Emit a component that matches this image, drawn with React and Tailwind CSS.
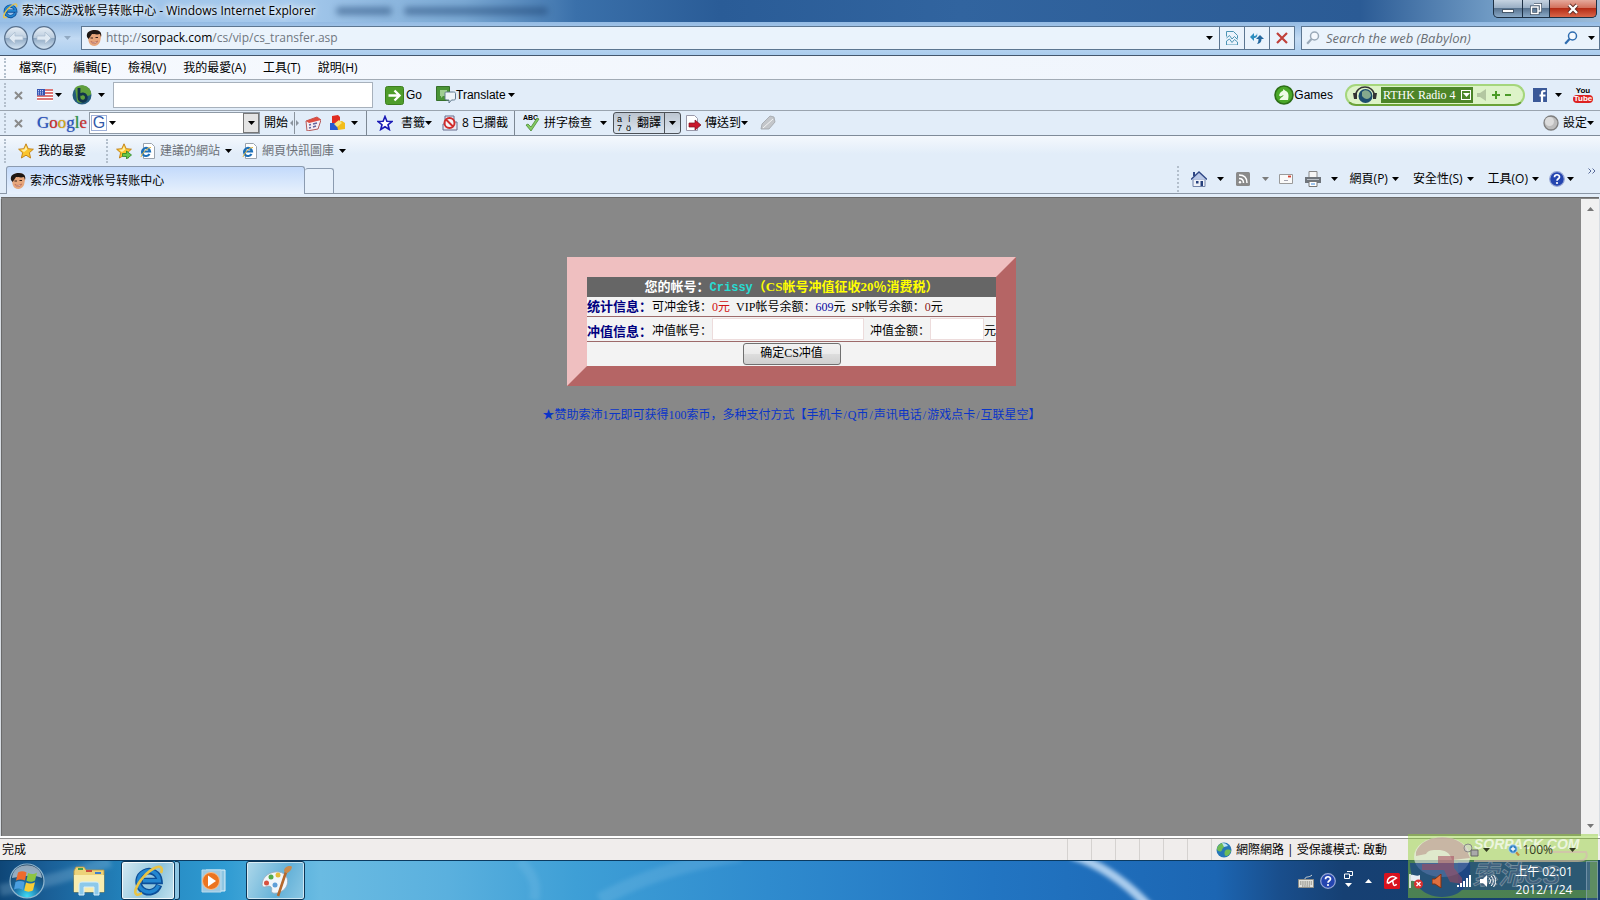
import { Fragment } from 'react';
import clsx from 'clsx';

const UI = 'font-["Open_Sans","Noto_Sans_CJK_TC",sans-serif]';
const SONG = 'font-["Liberation_Serif","Noto_Sans_CJK_SC",serif]';

const MENUS = ['檔案(F)', '編輯(E)', '檢視(V)', '我的最愛(A)', '工具(T)', '說明(H)'];
const PAYMENTS = ['手机卡', 'Q币', '声讯电话', '游戏点卡', '互联星空'];

function Caret({ className }) {
  return (
    <svg viewBox="0 0 7 4" className={clsx('h-1 w-[7px] shrink-0', className)} fill="currentColor">
      <path d="M0 0h7L3.5 4z" />
    </svg>
  );
}

function Grip({ className }) {
  return <div className={clsx('w-0 shrink-0 border-l-2 border-dotted border-[#b3bfcc]', className)} />;
}

function CloseX() {
  return (
    <button aria-label="Close toolbar" className="shrink-0 text-[#8a8a8a]">
      <svg viewBox="0 0 9 9" className="h-[9px] w-[9px]" stroke="currentColor" strokeWidth="2">
        <path d="M1 1l7 7M8 1L1 8" />
      </svg>
    </button>
  );
}

function IeLogo({ className }) {
  return (
    <svg viewBox="0 0 32 32" className={className} fill="none">
      <path d="M27 20A10.500 10.500 0 1 1 27.500 16H10" stroke="#0c4f99" strokeWidth="6.500" />
      <path d="M26.500 20.500A10.500 10.500 0 1 1 27.300 15.700H11" stroke="#2386d0" strokeWidth="3.500" />
      <path d="M29 8c2-5 0-7.500-5-5.500C15 6 6 17 3.500 25c-1 5 1.500 6 6.500 3" stroke="#e9c445" strokeWidth="2.600" />
    </svg>
  );
}

function IePage() {
  return (
    <svg viewBox="0 0 16 16" className="h-4 w-4 shrink-0" fill="none">
      <path d="M3.500.5h8l3 3v12h-11z" fill="#fff" stroke="#9aa3ad" />
      <path d="M9.500 11A4 4 0 1 1 10 8.500H3" stroke="#1e70b8" strokeWidth="2.200" />
      <path d="M11 4.500C8 4 2 10 1 14" stroke="#e6b93a" />
    </svg>
  );
}

function Face() {
  return (
    <svg viewBox="0 0 16 16" className="h-4 w-4 shrink-0">
      <path d="M2 6c0-4 3-6 7-6s7 3 6 7l-1 5c-2 4-6 5-9 3-2-1-3-5-3-9z" fill="#e6a67c" />
      <path d="M1 7C0 2 4 0 9 0s7 3 6 7l-1-3c-3 1-6 0-8 0L4 7 2.500 9z" fill="#1e1714" />
      <path d="M4.500 8h2.500M9.500 7.500H12" stroke="#3b241b" strokeWidth="1.200" />
      <path d="M5 11.500c2 1.500 4.500 1.200 6.500-.5-.5 3-5 3.500-6.500.5z" fill="#fff" stroke="#a4493a" strokeWidth=".6" />
    </svg>
  );
}

function NavOrb({ flip }) {
  return (
    <button aria-label={flip ? 'Forward' : 'Back'} className="flex h-6 w-6 shrink-0">
      <svg viewBox="0 0 24 24" className={clsx('h-6 w-6', flip && '-scale-x-100')}>
        <defs>
          <linearGradient id="orb" x1="0" y1="0" x2="0" y2="1">
            <stop offset="0" stopColor="#e8eff6" />
            <stop offset=".48" stopColor="#bccddf" />
            <stop offset=".52" stopColor="#8fa9c4" />
            <stop offset="1" stopColor="#d8e8f5" />
          </linearGradient>
        </defs>
        <circle cx="12" cy="12" r="11.300" fill="url(#orb)" stroke="#58708c" strokeWidth="1.200" />
        <path d="M5 12l6-6v4h8v4h-8v4z" fill="#dfe9f3" stroke="#a9bccf" strokeWidth=".7" />
      </svg>
    </button>
  );
}

function StarIcon({ arrow }) {
  return (
    <svg viewBox="0 0 16 16" className="h-4 w-4 shrink-0">
      <path d="M8 .8l2.200 4.900 5.200.5-4 3.500 1.200 5.300L8 12.200 3.400 15l1.200-5.300-4-3.500 5.200-.5z" fill="#fbc52d" stroke="#c07d12" strokeWidth=".9" />
      <path d="M8 3l1.300 3.500L6 9l-3-2.200 3.300-.4z" fill="#fff0a6" />
      {arrow && <path d="M6.500 10.500h4V8l5 4-5 4v-2.500h-4z" fill="#67c84a" stroke="#2b8423" strokeWidth=".8" />}
    </svg>
  );
}

function Help({ className }) {
  return (
    <svg viewBox="0 0 16 16" className={clsx('h-4 w-4 shrink-0', className)}>
      <circle cx="8" cy="8" r="7.300" fill="#2445b0" stroke="#98a7d6" strokeWidth="1.200" />
      <path d="M5.500 6.200C5.500 3 10.500 3 10.500 6c0 1.800-2.500 1.800-2.500 3.800" stroke="#fff" strokeWidth="1.700" fill="none" />
      <circle cx="8" cy="12" r="1.100" fill="#fff" />
    </svg>
  );
}

function Magnifier({ className }) {
  return (
    <svg viewBox="0 0 14 14" className={clsx('h-3.5 w-3.5 shrink-0', className)} fill="none" stroke="currentColor">
      <circle cx="8.500" cy="5" r="4" strokeWidth="1.500" fill="#ffffff88" />
      <path d="M5.500 8L1.200 12.800" strokeWidth="2.200" />
    </svg>
  );
}

function TitleBar() {
  return (
    <header className="flex h-[22px] items-start justify-between bg-[linear-gradient(90deg,#98bfe6_0%,#a6caed_18%,#7ba9d4_29%,#3a70aa_36%,#2a5c97_45%,#31649f_60%,#2b5b95_85%,#6e99c3_93%,#9dbcd9_100%)]">
      <div className="flex items-center gap-1 pl-0.5">
        <IeLogo className="h-4 w-4" />
        <h1 className="text-[12px] leading-[22px] text-black [text-shadow:0_0_6px_#fff,0_0_10px_#fff,0_0_4px_#ffffffaa]">
          索沛CS游戏帐号转账中心 - Windows Internet Explorer
        </h1>
        <div className="ml-4 h-2 w-14 rounded bg-[#1d4472]/50 blur-[3px]" />
        <div className="ml-2 h-2 w-36 rounded bg-[#1d4472]/50 blur-[3px]" />
      </div>
      <div className="mr-[3px] flex h-[18px] overflow-hidden rounded-b-[5px] border border-t-0 border-[#1d3044] bg-[#1d3044]">
        <button aria-label="Minimize" className="flex w-7 items-center justify-center bg-[linear-gradient(#c5d3e1_0%,#9aafc5_45%,#58738f_50%,#8aa9c7_100%)]">
          <span className="mt-1 h-1 w-3 border border-[#46586b] bg-white" />
        </button>
        <button aria-label="Restore" className="ml-px flex w-[26px] items-center justify-center bg-[linear-gradient(#c5d3e1_0%,#9aafc5_45%,#58738f_50%,#8aa9c7_100%)]">
          <svg viewBox="0 0 12 12" className="h-3 w-3" fill="none">
            <path d="M4 1h7v7H8.500M1.500 4h6.500v6.500H1.500z" stroke="#3f5164" strokeWidth="3" />
            <path d="M4 1.500h6.500v6.500H8.500M1.500 4h6.500v6.500H1.500z" stroke="#fff" strokeWidth="1.500" />
          </svg>
        </button>
        <button aria-label="Close" className="ml-px flex w-[46px] items-center justify-center bg-[linear-gradient(#e5a99c_0%,#d3715d_45%,#b52c16_50%,#d9664a_100%)]">
          <svg viewBox="0 0 12 12" className="h-3 w-3">
            <path d="M2 2l8 8M10 2l-8 8" stroke="#5c2a24" strokeWidth="4" />
            <path d="M2 2l8 8M10 2l-8 8" stroke="#fff" strokeWidth="2.400" />
          </svg>
        </button>
      </div>
    </header>
  );
}

function AddressBar() {
  const box = 'flex h-6 items-center border border-[#5c7691] bg-[#eaf3fc]';
  return (
    <div className="flex h-[34px] items-center border-b border-[#44566c] bg-[linear-gradient(#93bae3,#c2daf3_50%,#abcdee)] pb-0.5 pl-1">
      <NavOrb />
      <div className="ml-1">
        <NavOrb flip />
      </div>
      <Caret className="ml-2 text-[#91a9c2]" />
      <form className={clsx(box, 'ml-2.5 min-w-0 flex-1 pl-1')} onSubmit={(e) => e.preventDefault()}>
        <Face />
        <label className="ml-1 flex-1 text-[12px] leading-5 text-[#6f7780]">
          http://<span className="text-black">sorpack.com</span>/cs/vip/cs_transfer.asp
        </label>
        <Caret className="mr-1.5" />
        <button aria-label="Compatibility view" className="flex h-full w-[25px] items-center justify-center border-l border-[#5c7691]">
          <svg viewBox="0 0 12 14" className="h-3.5 w-3" fill="none" stroke="#4d95b5">
            <path d="M.5 5.500v-5h7l4 4v3M.5 7l3-2.500L6 8l2.500-2.500 3 3M.5 10l3-2 2.500 3.500 2.500-3 3 2.500v3H.5z" />
          </svg>
        </button>
        <button aria-label="Refresh" className="flex h-full w-[25px] items-center justify-center border-l border-[#5c7691]">
          <svg viewBox="0 0 14 12" className="h-3 w-3.5">
            <path d="M0 5l4-4v3c2 0 3-1 3-3 1 4-1 5-3 5v3z" fill="#2d8ec0" />
            <path d="M14 7l-4-4-4 4h2.500c0 2-.5 4-1.500 5 3-.5 4.500-2 4.500-5z" fill="#24689f" />
          </svg>
        </button>
        <button aria-label="Stop" className="flex h-full w-[25px] items-center justify-center border-l border-[#5c7691]">
          <svg viewBox="0 0 12 12" className="h-3 w-3" stroke="#c0403a" strokeWidth="2.200">
            <path d="M1 1l10 10M11 1L1 11" />
          </svg>
        </button>
      </form>
      <form className={clsx(box, 'ml-1.5 w-[299px] px-1')} onSubmit={(e) => e.preventDefault()}>
        <Magnifier className="text-[#9aa9b8]" />
        <input
          aria-label="Search the web"
          placeholder="Search the web (Babylon)"
          className="ml-1.5 min-w-0 flex-1 bg-transparent text-[13px] italic leading-5 outline-none placeholder:text-[#6b7075]"
        />
        <Magnifier className="text-[#2f6db0]" />
        <Caret className="ml-2.5" />
      </form>
    </div>
  );
}

function MenuBar() {
  return (
    <nav className="flex h-6 items-center border-b border-[#a2abb5] bg-[linear-gradient(90deg,#f6f9fe,#eef4fc)] pl-1">
      <Grip className="h-5" />
      <div className="ml-[13px] flex gap-[17px]">
        {MENUS.map((m) => (
          <button key={m} className="text-[12px] leading-5">{m}</button>
        ))}
      </div>
    </nav>
  );
}

function BabylonBar() {
  return (
    <div className='flex h-[31px] items-center border-b border-[#9aa4af] bg-[#e2edf9] pl-1 pr-2 font-["Liberation_Sans",sans-serif] text-[12px]'>
      <Grip className="mr-2 h-6" />
      <CloseX />
      <svg viewBox="0 0 16 12" className="ml-3.5 h-3 w-4">
        <path d="M0 0h16v12H0z" fill="#fff" />
        <path d="M0 1h16M0 4h16M0 7h16M0 10h16" stroke="#d24a4a" strokeWidth="1.500" />
        <path d="M0 0h8v6.500H0z" fill="#3656b4" />
        <path d="M1 1.500h6M1 3.200h6M1 5h6" stroke="#c9d6fa" strokeDasharray="1 1" />
      </svg>
      <Caret className="ml-0.5 mr-2.5" />
      <svg viewBox="0 0 20 20" className="h-5 w-5">
        <circle cx="10" cy="10" r="9.500" fill="#235b7b" />
        <path d="M3 3c4-4 13-4 16 4 1 5-3 2-5 6-2 5-7 6-9 3z" fill="#5f9f3d" />
        <path d="M7 3v9.500a3.700 3.700 0 1 0 1-2.500" stroke="#12344c" strokeWidth="2.800" fill="none" />
      </svg>
      <Caret className="ml-1.5 mr-2" />
      <input aria-label="Babylon search" className="h-[26px] w-[260px] border border-[#a7b1bc] bg-white px-1" />
      <button className="ml-3 flex items-center gap-0.5">
        <svg viewBox="0 0 19 19" className="h-[19px] w-[19px]">
          <rect x=".5" y=".5" width="18" height="18" rx="2" fill="#4f9d2b" stroke="#3c7e1f" />
          <path d="M3.500 9.500h10M9.500 4.500l5 5-5 5" stroke="#fff" strokeWidth="2.400" fill="none" />
        </svg>
        Go
      </button>
      <button className="ml-3.5 flex items-center">
        <svg viewBox="0 0 20 18" className="h-[18px] w-5">
          <path d="M.5.5h13v14H.5z" fill="#4a9436" stroke="#35702a" />
          <path d="M4 4h7v6H7l-2 2v-2H4z" fill="#9fce91" />
          <path d="M10 6h7.500c2 0 2 1 2 2v4c0 2-1 2-2 2h-2L13 17v-3h-2c-2 0-2-1-2-2V8c0-1 0-2 1-2z" fill="#eef4f8" stroke="#60798c" />
        </svg>
        Translate
        <Caret className="ml-0.5" />
      </button>
      <div className="ml-auto flex items-center">
        <button className="flex items-center">
          <svg viewBox="0 0 20 20" className="h-5 w-5">
            <circle cx="10" cy="10" r="9" fill="#4ba829" stroke="#2c6e17" strokeWidth="1.600" />
            <path d="M5.500 15h8.500c1-4 1-8-3-9.500L9.500 4 9 5.800C7 6.500 5.500 8.500 5 10.500l1.500 1 3-1.500c0 2-3.500 2.500-4 5z" fill="#effbe6" />
          </svg>
          Games
        </button>
        <div className="ml-3 flex h-[22px] w-[180px] items-center rounded-full border-2 border-[#a5d67c] border-b-[#6aa338] bg-[#ddf3c8] pl-1.5">
          <svg viewBox="0 0 24 18" className="h-[18px] w-6 shrink-0">
            <circle cx="12.500" cy="10" r="7" fill="#1d4e6f" />
            <path d="M9 6c4-4 9 0 9 4-2 4-6 4-9 0z" fill="#84a98d" />
            <path d="M2.500 10C3-2 21-2 21.500 10" stroke="#333" strokeWidth="1.600" fill="none" />
            <path d="M0 7h4v6H1zM20 7h4l-1 6h-3z" fill="#333" />
          </svg>
          <button className='ml-1 flex h-4 w-[92px] shrink-0 items-center justify-between bg-[#4c8529] px-0.5 font-["Liberation_Serif",serif] text-[12px] leading-4 whitespace-nowrap text-white'>
            RTHK Radio 4
            <span className="flex h-2.5 w-2.5 items-center justify-center border border-white">
              <Caret />
            </span>
          </button>
          <svg viewBox="0 0 10 12" className="ml-1 h-3 w-2.5" fill="#b3c7a1">
            <path d="M0 4h3l6-4v12L3 8H0z" />
          </svg>
          <svg viewBox="0 0 22 10" className="ml-1 h-2.5 w-[22px]" stroke="#4b9b27" strokeWidth="2">
            <path d="M1 5h8M5 1v8M14 5h6" />
          </svg>
        </div>
        <svg viewBox="0 0 14 14" className="ml-2 h-3.5 w-3.5">
          <path d="M0 0h14v14H0z" fill="#3b5998" />
          <path d="M9 14V5c0-2 1-2 3.500-2M6.500 7.500h6" stroke="#fff" strokeWidth="2.200" fill="none" />
        </svg>
        <Caret className="ml-2" />
        <button className="ml-3 flex w-[18px] flex-col items-center text-[8px] font-bold leading-2">
          You
          <span className="rounded-sm bg-[#d22] px-px text-white">Tube</span>
        </button>
      </div>
    </div>
  );
}

function GoogleBar() {
  const sep = 'h-full w-px shrink-0 bg-[#7d8894]';
  return (
    <div className="flex h-[25px] items-center border-b border-[#7f8b99] bg-[#e2edf9] pl-1 pr-1.5 text-[12px] leading-5 whitespace-nowrap">
      <Grip className="mr-2 h-5" />
      <CloseX />
      <div className='ml-3.5 w-12 font-["Liberation_Serif",serif] text-[17px] leading-5 [text-shadow:0_0_1px_#6a7390]'>
        <span className="text-[#2a56c6]">G</span>
        <span className="text-[#d8322c]">o</span>
        <span className="text-[#e2ac15]">o</span>
        <span className="text-[#2a56c6]">g</span>
        <span className="text-[#2f9c3e]">l</span>
        <span className="text-[#d8322c]">e</span>
      </div>
      <div className="ml-1 flex h-[22px] w-[171px] items-center border border-[#8f9aa6] bg-white pl-px">
        <span className='flex h-4 w-4 items-center justify-center border border-[#9fb0d8] font-["Liberation_Sans",sans-serif] text-[16px] leading-4 text-[#3158a8]'>G</span>
        <Caret className="ml-0.5" />
        <input aria-label="Google search" className="min-w-0 flex-1 outline-none" />
        <button aria-label="Search history" className="flex h-5 w-4 items-center justify-center border border-[#777] bg-[#e4e4e4]">
          <Caret />
        </button>
      </div>
      <button className="ml-1">開始</button>
      <svg viewBox="0 0 9 22" className="ml-0.5 h-[22px] w-[9px]">
        <path d="M4.500 0v22" stroke="#8b949e" />
        <path d="M3 8v6L0 11zM6 8v6l3-3z" fill="#8b949e" />
      </svg>
      <svg viewBox="0 0 16 16" className="ml-1.5 h-4 w-4">
        <path d="M1 6l11-4 4 3-3 9-11 2z" fill="#f4eef4" stroke="#b35a5a" />
        <path d="M1 6l11-4 4 3-12 3z" fill="#dd4c40" />
        <path d="M4 10l2-.5M8 9l4-1M4 13l2-.5M8 12l3-1" stroke="#63649c" strokeWidth="1.500" />
      </svg>
      <svg viewBox="0 0 16 16" className="ml-2 h-4 w-4">
        <path d="M3 1l6-1 2 2v6H3z" fill="#e02c20" />
        <path d="M1 8h8v7H1z" fill="#2659cf" />
        <path d="M7 7l6-1 3 2v6l-7 1z" fill="#f2bd1a" />
        <path d="M5 9l5-4 3 3-5 4z" fill="#fae278" />
      </svg>
      <Caret className="ml-1.5 mr-2" />
      <div className={sep} />
      <button className="ml-2.5 flex items-center">
        <svg viewBox="0 0 16 16" className="mr-2 h-4 w-4">
          <path d="M8 1.500l1.900 4.700 5 .3-3.900 3.200 1.300 4.800L8 11.800l-4.300 2.700L5 9.700 1.100 6.500l5-.3z" fill="#fff" stroke="#1919b5" strokeWidth="1.600" />
        </svg>
        書籤
        <Caret />
      </button>
      <button className="ml-2.5 flex items-center">
        <svg viewBox="0 0 16 16" className="mr-1 h-4 w-4">
          <path d="M3 1h9v6h3v8H1V9h2z" fill="#e9e9f2" stroke="#666d8c" />
          <circle cx="7.500" cy="8" r="5" fill="#fff8" stroke="#d02c2c" strokeWidth="2" />
          <path d="M4 4.500l7 7" stroke="#d02c2c" strokeWidth="2" />
        </svg>
        8 已攔截
      </button>
      <div className={clsx(sep, 'ml-1.5')} />
      <button className="ml-2 flex items-center">
        <svg viewBox="0 0 18 18" className="mr-[3px] h-[18px] w-[18px]">
          <text x="0" y="6" fontSize="7" fontWeight="bold" fontFamily="Liberation Sans">ABC</text>
          <path d="M3 11l2-1 3 3 6-9 2 1-8 12z" fill="#85cb62" stroke="#4a8a35" strokeWidth=".8" />
        </svg>
        拼字檢查
        <Caret className="ml-2" />
      </button>
      <div className="ml-1.5 flex h-[22px] rounded-[3px] border border-[#4c5157] bg-[linear-gradient(#bcc5d0,#dbe5f0)]">
        <button className="flex items-center px-[3px]">
          <svg viewBox="0 0 16 18" className="mr-1 h-[18px] w-4">
            <text x="0" y="8" fontSize="9" fontFamily="Liberation Sans">a</text>
            <text x="11" y="8" fontSize="9" fontFamily="Liberation Sans">í</text>
            <text x="0" y="17" fontSize="9" fontFamily="Liberation Sans">7</text>
            <text x="9" y="17" fontSize="9" fontFamily="Liberation Sans">ö</text>
          </svg>
          翻譯
        </button>
        <button aria-label="Translate options" className="flex w-4 items-center justify-center border-l border-[#4c5157]">
          <Caret />
        </button>
      </div>
      <button className="ml-1 flex items-center">
        <svg viewBox="0 0 16 16" className="mr-1 h-4 w-4">
          <path d="M1.500.5h8l3 3v12h-11z" fill="#fff" stroke="#99a" />
          <path d="M4 8h6V5l6 5-6 5v-3H4z" fill="#c9172b" stroke="#7e0f1c" strokeWidth=".7" />
        </svg>
        傳送到
        <Caret />
      </button>
      <svg viewBox="0 0 16 16" className="ml-3 h-4 w-4">
        <path d="M1 14l1-5 8-8 4 1 1 5-6 7z" fill="#c3c6ca" stroke="#9fa3a8" strokeWidth=".8" />
        <path d="M3 13L13 4" stroke="#f3f4f5" />
      </svg>
      <button className="ml-auto flex items-center">
        <svg viewBox="0 0 16 16" className="mr-1 h-4 w-4">
          <circle cx="8" cy="8" r="7" fill="#bdbdbd" stroke="#7e7e7e" strokeWidth="1.300" />
          <circle cx="6.500" cy="6.500" r="4.500" fill="#dcdcdc" />
        </svg>
        設定
        <Caret />
      </button>
    </div>
  );
}

function FavoritesBar() {
  return (
    <div className="flex h-[30px] items-center bg-[linear-gradient(#f4f8fd,#e2edf9_60%)] pl-1 text-[12px] leading-5 text-[#6c7178]">
      <Grip className="h-6" />
      <button className="ml-3 flex items-center gap-1 text-black">
        <StarIcon />
        我的最愛
      </button>
      <Grip className="ml-5 h-6" />
      <div className="ml-2 flex items-center gap-2">
        <StarIcon arrow />
        <button className="flex items-center gap-1">
          <IePage />
          建議的網站
          <Caret className="ml-px text-black" />
        </button>
        <button className="ml-0.5 flex items-center gap-1">
          <IePage />
          網頁快訊圖庫
          <Caret className="ml-px text-black" />
        </button>
      </div>
    </div>
  );
}

function TabBar() {
  return (
    <div className="flex h-[33px] flex-col bg-[#e2edf9]">
      <div className="flex h-7 items-end border-b border-[#8b97a6] pl-1.5 text-[12px] leading-5">
        <div className="-mb-px flex h-7 w-[299px] items-center gap-1 rounded-t-[3px] border border-b-0 border-[#8b9bb0] bg-[linear-gradient(#c3dafb,#d9e8fc_60%,#e8f1fc)] pl-[3px]">
          <Face />
          索沛CS游戏帐号转账中心
        </div>
        <button aria-label="New tab" className="h-[25px] w-[29px] rounded-t-[3px] border border-b-0 border-l-0 border-[#8b9bb0] bg-[#e6f0fb]" />
        <div className="mb-px ml-auto flex h-[26px] items-center">
          <Grip className="h-[26px]" />
          <svg viewBox="0 0 16 16" className="ml-3 h-4 w-4">
            <path d="M2 8h12v7.500H2z" fill="#eef1f8" stroke="#7182a8" />
            <path d="M0 8.500L8 1l8 7.500" fill="#b8c7e6" stroke="#2f4785" strokeWidth="1.300" />
            <path d="M2 1h2v4H2z" fill="#2f4785" />
            <path d="M5 10h2.500v2.500H5zM9.500 10h2.500v5H9.500z" fill="#25407c" />
          </svg>
          <Caret className="ml-2.5" />
          <svg viewBox="0 0 14 14" className="ml-3 h-3.5 w-3.5">
            <rect width="14" height="14" rx="1.500" fill="#8a8a8a" />
            <path d="M3 3c5 0 8 3 8 8M3 6.500c3 0 4.500 1.500 4.500 4.500" stroke="#fff" strokeWidth="1.500" fill="none" />
            <circle cx="4" cy="10.200" r="1.200" fill="#fff" />
          </svg>
          <Caret className="ml-3 text-[#7c7c7c]" />
          <svg viewBox="0 0 14 10" className="ml-2.5 h-2.5 w-3.5">
            <path d="M.5.5h13v9H.5z" fill="#fafafa" stroke="#9a9a9a" />
            <path d="M9 2.500h3" stroke="#d4402f" strokeWidth="1.800" />
            <path d="M5 6.500h4" stroke="#a5a5b0" />
          </svg>
          <svg viewBox="0 0 16 16" className="ml-3 h-4 w-4">
            <path d="M4 .5h8V7H4z" fill="#f6f6f6" stroke="#888" />
            <path d="M0 6h16v6H0z" fill="#6f757c" />
            <path d="M2 8.500h12" stroke="#b9c0c7" />
            <path d="M4 10.500h8v5H4z" fill="#fff" stroke="#777" />
            <path d="M6 13h4" stroke="#3c8be0" />
          </svg>
          <Caret className="ml-2.5" />
          <button className="ml-3 flex items-center gap-1">網頁(P)<Caret /></button>
          <button className="ml-3.5 flex items-center gap-1">安全性(S)<Caret /></button>
          <button className="ml-3.5 flex items-center gap-1">工具(O)<Caret /></button>
          <button aria-label="Help" className="ml-2.5 flex items-center gap-0.5"><Help /><Caret /></button>
          <svg viewBox="0 0 8 6" className="mb-4 ml-3.5 mr-1 h-1.5 w-2" fill="none" stroke="#596a99">
            <path d="M.5.5L3 3 .5 5.500M4.500.5L7 3 4.500 5.500" />
          </svg>
        </div>
      </div>
      <div className="mx-px mt-[3px] flex-1 border-t border-[#6a6a6a] bg-[#888]" />
    </div>
  );
}

function TransferForm() {
  return (
    <form
      onSubmit={(e) => e.preventDefault()}
      className="w-[449px] border-[20px] border-b-[#b56565] border-l-[#efbfc0] border-r-[#b56565] border-t-[#efbfc0] bg-[#f3f3f3] text-[12px] leading-[19px]"
    >
      <h2 className="h-5 bg-[#666] text-center text-[13px] font-bold leading-5 text-white">
        您的帐号：<span className='font-["Liberation_Mono",monospace] text-[12px] text-[#28dcd2]'>Crissy</span>
        <span className="text-[#ffff00]">（CS帐号冲值征收20％消费税）</span>
      </h2>
      <div className="flex h-5 items-baseline gap-1.5 border-b border-[#9d6a6a]">
        <p>
          <b className="text-[13px] text-[#000080]">统计信息：</b>可冲金钱：<span className="text-[#d01010]">0元</span>
        </p>
        <p>VIP帐号余额：<span className="text-[#0a0aa0]">609</span>元</p>
        <p>SP帐号余额：<span className="text-[#8b1a1a]">0</span>元</p>
      </div>
      <div className="flex h-[25px] items-end border-b border-[#9d6a6a]">
        <b className="text-[13px] text-[#000080]">冲值信息：</b>
        <label htmlFor="account">冲值帐号：</label>
        <input id="account" className="mb-px h-[22px] w-[152px] border border-[#eddcdc] bg-white px-1" />
        <label htmlFor="amount" className="ml-1.5">冲值金额：</label>
        <input id="amount" className="mb-px h-[22px] min-w-0 flex-1 border border-[#eddcdc] bg-white px-1" />
        元
      </div>
      <div className="flex h-6 items-center justify-center">
        <button className="h-[22px] w-[98px] rounded-[3px] border border-[#707070] bg-[linear-gradient(#f2f2f2_0%,#ebebeb_50%,#dddddd_52%,#cfcfcf_100%)] pb-0.5 leading-4">
          确定CS冲值
        </button>
      </div>
    </form>
  );
}

// text that sits above the translucent site badge in the corner needs z-20
function StatusBar() {
  return (
    <footer className="flex h-6 flex-col bg-white pt-0.5">
      <div className="flex flex-1 items-center border-t border-[#8f8f8f] bg-[#f0edec] pl-0.5 text-[12px] leading-5">
        <span className="flex-1">完成</span>
        <div className="flex h-full">
          {[0, 1, 2, 3, 4, 5].map((n) => (
            <div key={n} className="w-6 border-l border-[#d5d2d0]" />
          ))}
        </div>
        <div className="flex h-full w-[252px] items-center gap-1 border-l border-[#d5d2d0] pl-1">
          <svg viewBox="0 0 16 16" className="h-4 w-4">
            <circle cx="8" cy="8" r="7.500" fill="#2577b8" />
            <path d="M3 3c3-3 6-2 6 0s-2 2-3 5-5 1-5-1 1-3 2-4zM10 8c2-1 5 0 5 1-1 3-3 5-5 5s-2-5 0-6z" fill="#6fbb56" />
            <path d="M6 1c3 0 5 1 6 3L8 5z" fill="#b8e2f5" />
          </svg>
          網際網路 | 受保護模式: 啟動
        </div>
        <div className="relative z-20 flex w-[137px] items-center pr-6 text-[#333b22]">
          <svg viewBox="0 0 16 14" className="h-3.5 w-4">
            <circle cx="5" cy="5" r="4" fill="#d8d8d8" stroke="#888" fillOpacity=".5" />
            <path d="M8 7h7v6H8z" fill="#a9a9a9" stroke="#666" />
          </svg>
          <Caret className="ml-1" />
          <button className="ml-auto flex items-center gap-0.5">
            <svg viewBox="0 0 12 12" className="h-3 w-3">
              <path d="M7 7l4 4.500" stroke="#c58a3c" strokeWidth="2.200" />
              <circle cx="5" cy="5" r="4.200" fill="#2f80c4" stroke="#aad4ef" />
              <path d="M5 2.800v4.400M2.800 5h4.400" stroke="#fff" strokeWidth="1.300" />
            </svg>
            100%
          </button>
          <Caret className="ml-4" />
        </div>
      </div>
    </footer>
  );
}

function Taskbar() {
  return (
    <div className="relative flex h-10 items-center overflow-hidden border-t border-[#0b3a60] bg-[linear-gradient(90deg,#0e4677_0%,#1a5f97_3%,#2383bc_8%,#2f9bd2_14%,#6abbe2_20%,#5ab0de_28%,#3e9fd6_36%,#2f8bce_48%,#2275c2_62%,#1c66b3_76%,#194e8c_80%,#164073_84%,#173f6c_100%)] text-white">
      <svg viewBox="0 0 1600 40" preserveAspectRatio="none" className="absolute inset-0 h-full w-full" fill="none">
        <defs>
          <filter id="soft" x="-20%" y="-50%" width="140%" height="200%">
            <feGaussianBlur stdDeviation="2" />
          </filter>
        </defs>
        <g filter="url(#soft)">
          <path d="M1072 -6Q1114 8 1150 48" stroke="#d8ecff" strokeOpacity=".75" strokeWidth="9" />
          <path d="M520 0q20 20 14 40" stroke="#bfe2f6" strokeOpacity=".12" strokeWidth="10" />
          <path d="M0 30Q60 20 110 0" stroke="#bfe2f6" strokeOpacity=".22" strokeWidth="12" />
          <path d="M600 40Q660 6 740 -6" stroke="#bfe2f6" strokeOpacity=".14" strokeWidth="14" />
        </g>
      </svg>
      <div className="relative flex h-full items-center">
        <button aria-label="Start" className="ml-[9px] h-9 w-9">
          <svg viewBox="0 0 36 36">
            <defs>
              <radialGradient id="start" cx=".5" cy=".95" r=".9">
                <stop offset="0" stopColor="#3fdcf5" />
                <stop offset=".45" stopColor="#1a6ba3" />
                <stop offset="1" stopColor="#173b5c" />
              </radialGradient>
            </defs>
            <circle cx="18" cy="18" r="17" fill="url(#start)" stroke="#8fb6cf" strokeWidth="1.200" />
            <path d="M3 15C4-2 32-2 33 15c-8-4-20-2-30 0z" fill="#e6eef5" fillOpacity=".6" />
            <path d="M9 9.500c3-2 6-1.500 8.500 0l-1.500 8c-3-1.500-6-1.500-9 0z" fill="#ee6a2d" />
            <path d="M19 10c3 1.500 6 1.500 9-.5l-2 8c-3 2-6 1.500-8.500.2z" fill="#8cc441" />
            <path d="M6.500 19c3-1.500 6-1.500 9 0l-1.500 8c-3-2-6-2-9-.5z" fill="#4b9fe0" />
            <path d="M17 19.500c3 1.500 6 1.500 9-.3l-2 8c-3 2-6 1.800-8.800.3z" fill="#f8cd37" />
          </svg>
        </button>
        <button aria-label="Windows Explorer" className="ml-7 h-8 w-8">
          <svg viewBox="0 0 32 32">
            <path d="M1 6l2-4h8l2 3h18v22H1z" fill="#ecd27a" stroke="#b7963e" strokeWidth=".8" />
            <path d="M5 3h5v2H5z" fill="#45a049" />
            <path d="M13 5h6v2h-6z" fill="#cb4b3d" />
            <path d="M22 7h6v2h-6z" fill="#3d7fcb" />
            <path d="M1 10h30v17H1z" fill="#f8ecae" />
            <path d="M6 30V20c0-2 1-3 3-3h14c2 0 3 1 3 3v10h-5v-8H11v8z" fill="#8dc9ea" stroke="#d8effa" />
          </svg>
        </button>
        <button aria-label="Internet Explorer" className="ml-4 flex h-full w-[54px] items-center justify-center rounded-[3px] border border-[#0b3556] bg-[linear-gradient(115deg,#d3e9f2,#8fc4dc_60%,#c3e2ef)] ring-1 ring-inset ring-white/80">
          <IeLogo className="h-8 w-8" />
        </button>
        <div className="h-full w-[5px] rounded-r-[3px] border border-l-0 border-[#0b3556] bg-[#8cc4e2]" />
        <button aria-label="Media Player" className="ml-5 h-[26px] w-[26px]">
          <svg viewBox="0 0 26 26">
            <path d="M6 2h19v21H6z" fill="#8fc6e2" stroke="#dff1fa" />
            <path d="M2 2h19v22H2z" fill="#9fc9e2" stroke="#b9dcee" />
            <circle cx="11" cy="13" r="8.500" fill="#ec7420" stroke="#fbbd86" />
            <path d="M8 7.500l8 5.500-8 5.500z" fill="#fff" />
          </svg>
        </button>
        <button aria-label="Paint" className="ml-5 flex h-full w-[59px] items-center justify-center rounded-[3px] border border-[#0b3556] bg-[linear-gradient(115deg,#aed8ea,#64b1d8_60%,#8cc8e4)] ring-1 ring-inset ring-white/60">
          <svg viewBox="0 0 32 32" className="h-8 w-8">
            <path d="M2 20C2 11 11 6 19 7c7 1 10 7 8 13s-9 9-14 8c-3-1 0-4-2-6-3-3-7 3-9-2z" fill="#f2f6fa" stroke="#93a7b8" strokeWidth=".8" />
            <circle cx="6.500" cy="18" r="2.500" fill="#d7503f" />
            <circle cx="11" cy="12" r="2.500" fill="#54ab4a" />
            <circle cx="18" cy="10" r="2.500" fill="#e6bc3a" />
            <circle cx="15" cy="20" r="2.500" fill="#5f9fd8" />
            <path d="M27 4L18 31" stroke="#b5682c" strokeWidth="2.600" />
            <path d="M24 6c0-5 7-6 8-4-1 4-4 6-6 6z" fill="#c98a4b" />
          </svg>
        </button>
      </div>
      <div className="relative z-20 ml-auto flex items-center">
        <svg viewBox="0 0 16 14" className="h-3.5 w-4">
          <path d="M.5 5.500h15v8H.5z" fill="#e2e2dc" stroke="#8f8f88" />
          <path d="M2 8h12M2 10h12M4 12h8" stroke="#77776f" strokeDasharray="1.500 .7" />
          <path d="M7 5c0-3 4-1 7-4" stroke="#cfd6d8" fill="none" />
        </svg>
        <Help className="ml-1.5" />
        <div className="ml-2 flex flex-col items-center gap-1 pb-1">
          <svg viewBox="0 0 9 8" className="h-2 w-[9px]" fill="none" stroke="#fff">
            <path d="M3 .5h5.500v4H6M.5 3h5v4.500h-5z" />
          </svg>
          <Caret />
        </div>
        <Caret className="ml-3 rotate-180" />
        <svg viewBox="0 0 16 16" className="ml-3 h-4 w-4">
          <rect width="16" height="16" rx="1.500" fill="#d9121e" />
          <path d="M3.500 10.500C2.500 5 8 1.500 12.500 5L4 10.500M8.500 7.500l1 4c.5 1.500 2.500 1 3-.5" stroke="#fff" strokeWidth="1.500" fill="none" />
        </svg>
        <svg viewBox="0 0 16 16" className="ml-2 h-4 w-4">
          <path d="M2 1v14" stroke="#fff" strokeWidth="1.500" />
          <path d="M3 2c3-1 5 2 9 0v6c-4 2-6-1-9 0z" fill="#e9eef5" />
          <circle cx="10.500" cy="11" r="4.500" fill="#d92f2f" />
          <path d="M8.500 9l4 4M12.500 9l-4 4" stroke="#fff" strokeWidth="1.400" />
        </svg>
        <svg viewBox="0 0 12 14" className="ml-2 h-3.5 w-3">
          <path d="M0 5h3l6-5v14L3 10H0z" fill="#e0703f" stroke="#7d3014" />
        </svg>
        <svg viewBox="0 0 16 14" className="ml-3 h-3.5 w-4" fill="#fff">
          <path d="M1 11h2v2H1zM4 9h2v4H4zM7 7h2v6H7zM10 4h2v9h-2zM13 1h2v12h-2z" />
        </svg>
        <svg viewBox="0 0 16 14" className="ml-2 h-3.5 w-4">
          <path d="M0 5h3l4-4v12L3 9H0z" fill="#fff" />
          <path d="M9 4c2 2 2 4 0 6M11 2c3 3 3 7 0 10M13.500 1c3 4 3 8 0 12" stroke="#fff" fill="none" />
        </svg>
        <div className="ml-4 w-16 text-center text-[12px] leading-[18px]">
          上午 02:01
          <br />
          2012/1/24
        </div>
        <button aria-label="Show desktop" className="ml-2.5 mr-0.5 h-10 w-3 border border-[#8fa9c0]/60 bg-white/10" />
      </div>
    </div>
  );
}

function Watermark() {
  return (
    <svg viewBox="0 0 190 64" className='pointer-events-none absolute bottom-0.5 right-0.5 z-10 h-16 w-[190px] font-["Liberation_Sans","Noto_Sans_CJK_SC",sans-serif]'>
      <path d="M0 0h190v64H0z" fill="#8fd02f" fillOpacity=".45" />
      <path d="M50 28h132v28H50z" fill="#173f8a" fillOpacity=".6" />
      <ellipse cx="34" cy="23" rx="28" ry="20" fill="#f2eef0" fillOpacity=".6" />
      <path d="M8 18C14 0 48-2 58 14l4 10-18 2c-2-8-8-10-14-10s-10 0-12 4l-10 2z" fill="#a46a6a" fillOpacity=".4" />
      <path d="M2 29h60c2 20-8 34-28 34S2 48 2 29z" fill="#17408a" fillOpacity=".7" />
      <path d="M30 22h16v12l8 10v6l-12-2-6-12H14v-6h16z" fill="#a5485c" fillOpacity=".55" />
      <text x="66" y="15" fontSize="14" fontWeight="bold" fontStyle="italic" fill="#fff" fillOpacity=".7">SORPACK.COM</text>
      <path d="M66 27h104c8 0 10-4 8-9h-36" fill="none" stroke="#d9b4b4" strokeOpacity=".6" strokeWidth="2" />
      <text x="64" y="50" fontSize="26" fontWeight="bold" fontStyle="italic" fill="#4c6684" fillOpacity=".6" stroke="#9fb0b8" strokeOpacity=".6" strokeWidth=".8">索沛CS</text>
    </svg>
  );
}

export default function App() {
  return (
    <div className={clsx('relative flex min-h-screen flex-col overflow-hidden bg-[#e2edf9] text-black', UI)}>
      <TitleBar />
      <AddressBar />
      <MenuBar />
      <BabylonBar />
      <GoogleBar />
      <FavoritesBar />
      <TabBar />
      <div className="flex flex-1 border-x border-[#d8dde3] bg-[#888]">
        <main className={clsx('flex flex-1 flex-col items-center border-l border-[#6a6a6a] pt-[58px]', SONG)}>
          <TransferForm />
          <a href="#sponsor" className="mt-[19px] text-[12px] leading-5 text-[#0a35c8]">
            ★赞助索沛1元即可获得100索币，多种支付方式【
            {PAYMENTS.map((name, i) => (
              <Fragment key={name}>
                {i > 0 && <span className="px-px">/</span>}
                {name}
              </Fragment>
            ))}
            】
          </a>
        </main>
        <div className="flex w-[18px] flex-col items-center justify-between bg-[#f1f1f1] py-2 text-[#777]">
          <Caret className="rotate-180" />
          <Caret />
        </div>
      </div>
      <StatusBar />
      <Taskbar />
      <Watermark />
    </div>
  );
}
